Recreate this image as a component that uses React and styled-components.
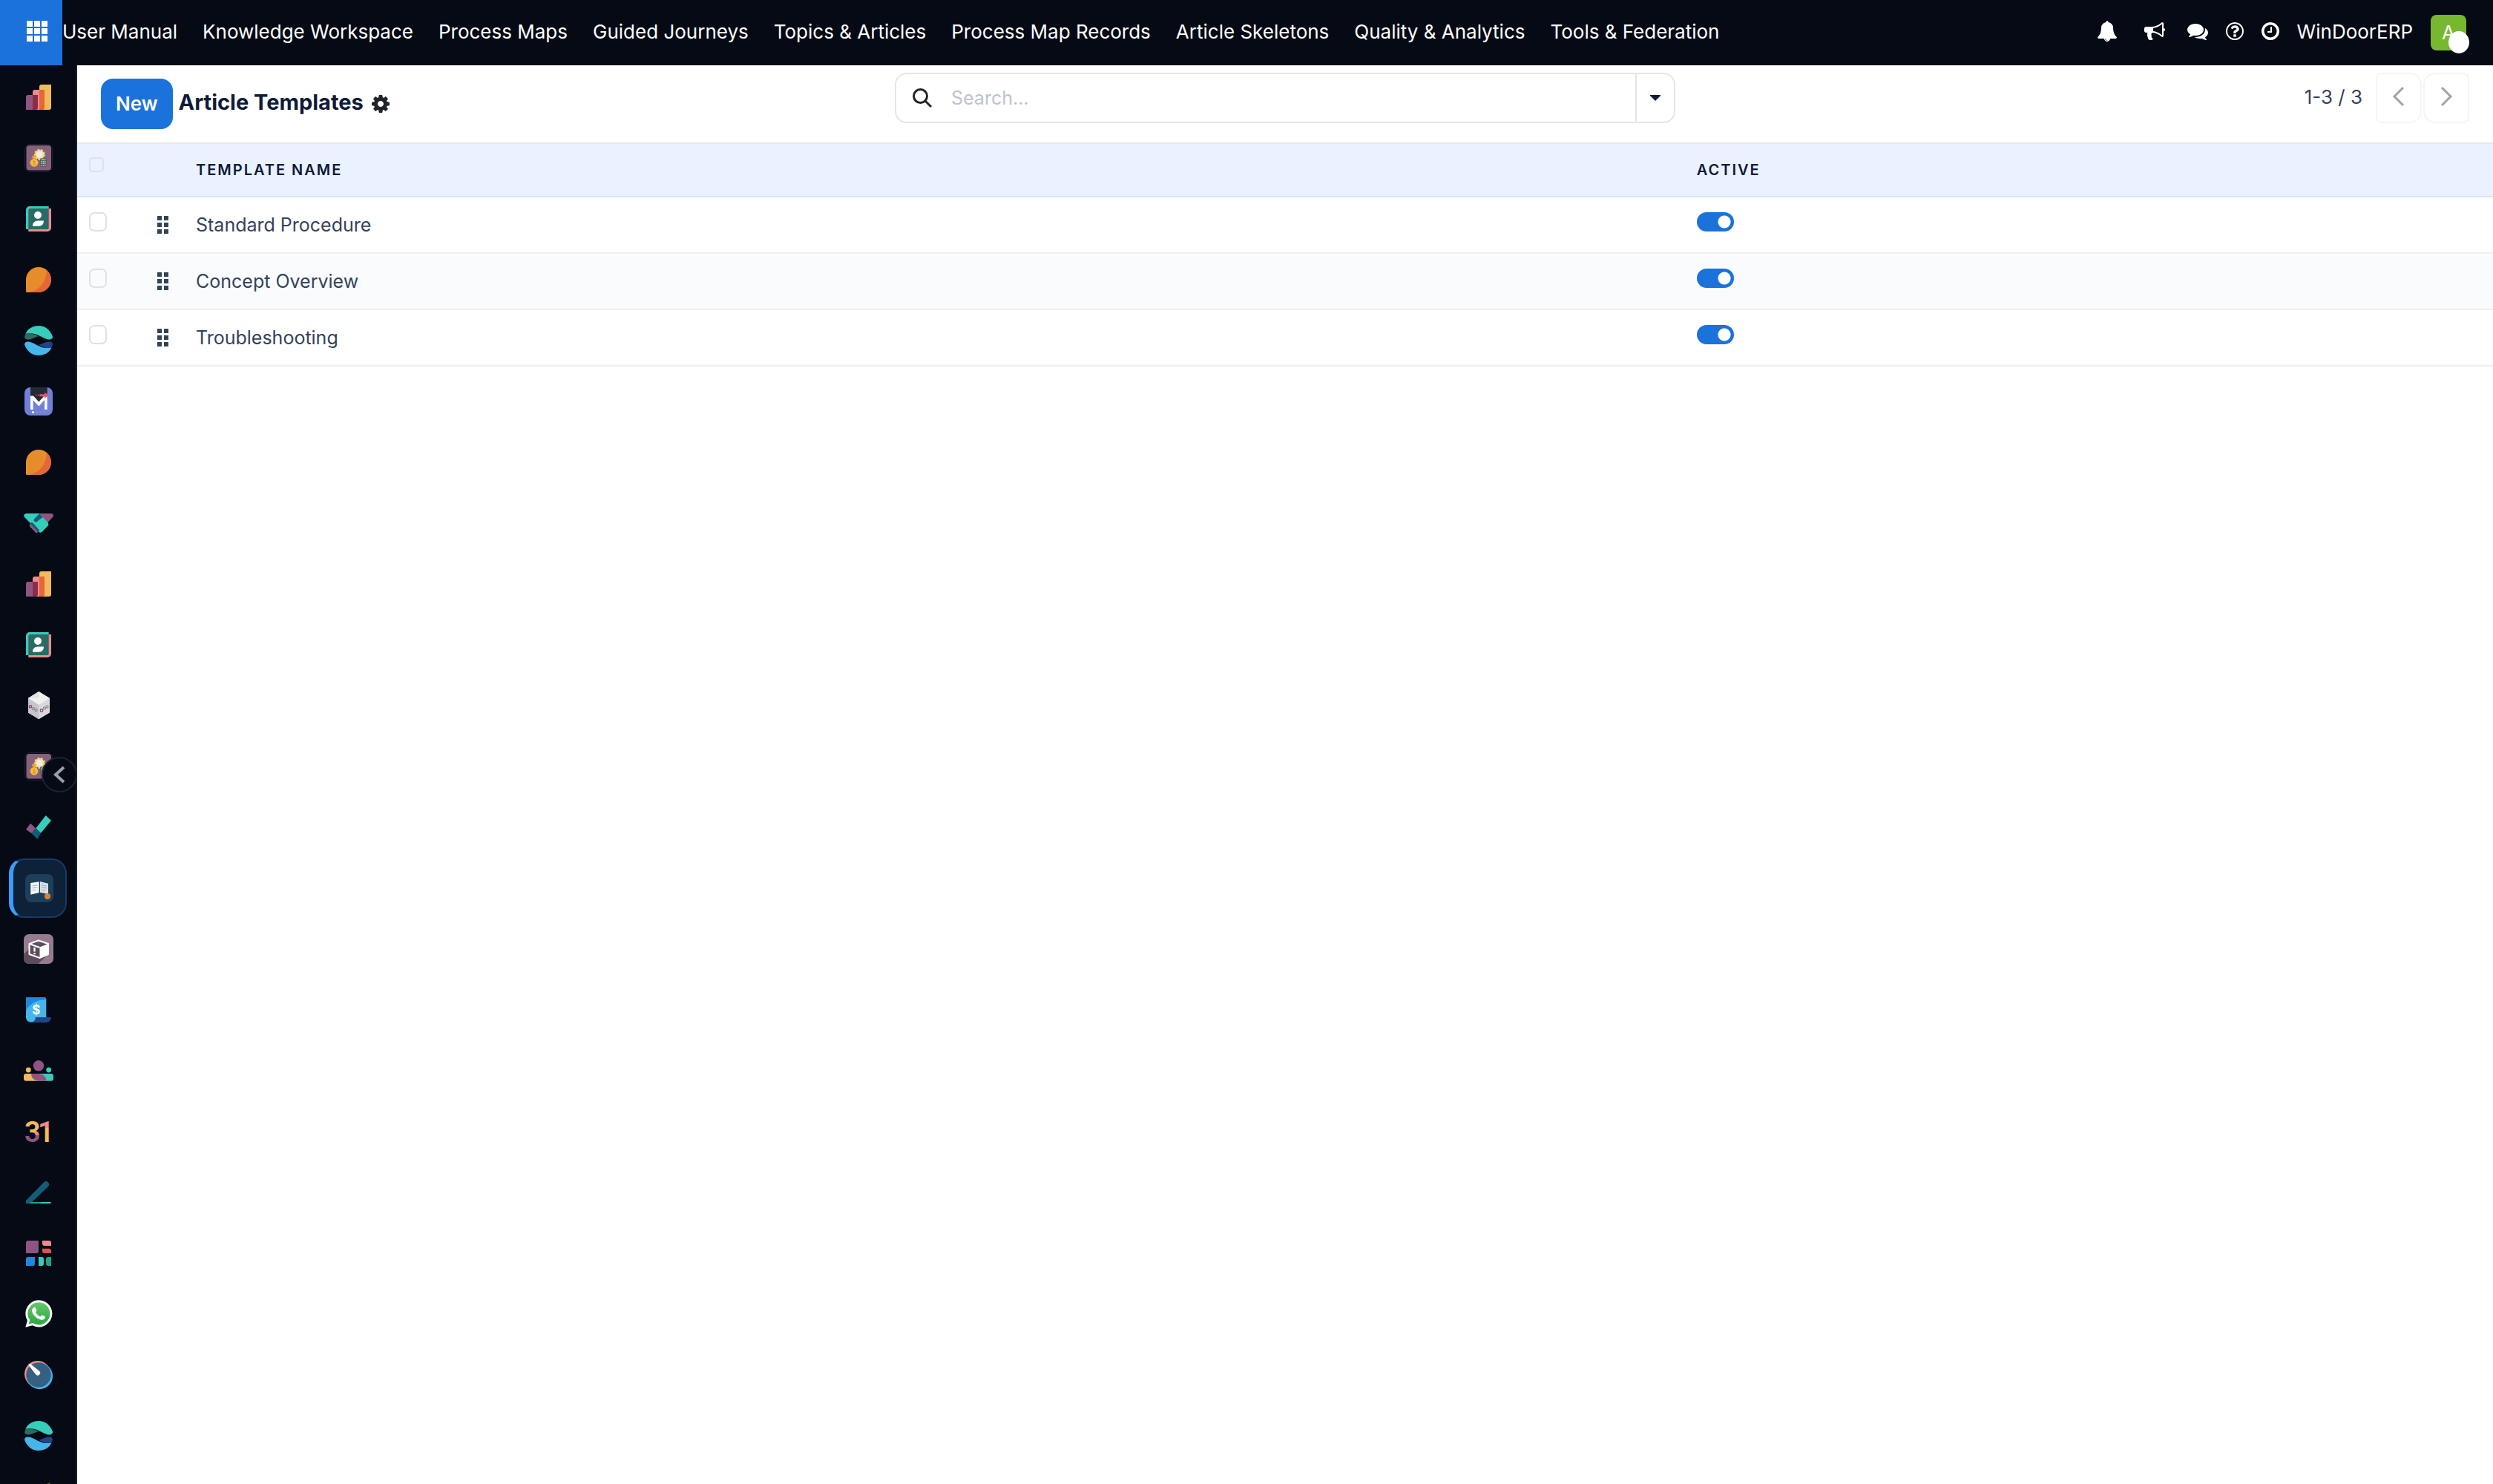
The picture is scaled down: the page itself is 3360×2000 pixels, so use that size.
import React from 'react';
import { useState } from 'react';
import styled, { createGlobalStyle } from 'styled-components';

const GlobalStyle = createGlobalStyle`
  *, *::before, *::after { box-sizing : border-box; }
  body {
    margin : 0;
    background-color : #ffffff;
    font-family : Inter, "Noto Sans", sans-serif;
    font-size : 26px;
    line-height : 40px;
    overflow : hidden;
  }
  button, input { font : inherit; }
  a { color : inherit; text-decoration : none; }
  svg { display : block; flex : none; overflow : visible; }
`

const Page = styled.div`
  height : 100vh;
  display : flex;
  flex-direction : column;
`

/* ---------- top bar ---------- */

const Navbar = styled.header`
  height : 88px;
  flex : none;
  display : flex;
  align-items : center;
  background-color : #050a15;
  color : #ffffff;
`

const AppsButton = styled.button`
  width : 84px;
  height : 100%;
  padding : 0 0 4px 16px;
  border : none;
  display : flex;
  align-items : center;
  justify-content : center;
  background-color : #1b72db;
  color : #ffffff;
  cursor : pointer;
`

const Menu = styled.nav`
  flex : 1;
  display : flex;
  gap : 34px;
  padding-bottom : 2px;
  white-space : nowrap;
`

const Systray = styled.div`
  display : flex;
  align-items : center;
  padding-right : 36px;
  white-space : nowrap;
`

const TrayButton = styled.button`
  padding : 0 ${props=>props.$pad || "10px"} 4px;
  border : none;
  background : none;
  color : #ffffff;
  cursor : pointer;
`

const Company = styled.span`
  padding : 0 24px 2px 12px;
`

const Avatar = styled.div`
  position : relative;
  width : 48px;
  height : 48px;
  border-radius : 8px;
  background-color : #78b82f;
  line-height : 48px;
  text-align : center;
`

const Status = styled.span`
  position : absolute;
  right : -4px;
  bottom : -4px;
  width : 28px;
  height : 30px;
  border-radius : 50%;
  background-color : #ffffff;
`

/* ---------- app sidebar ---------- */

const Body = styled.div`
  flex : 1;
  min-height : 0;
  display : flex;
`

const Sidebar = styled.aside`
  position : relative;
  width : 104px;
  flex : none;
  border-right : 2px solid #1b2331;
  background-color : #050a15;
`

const AppList = styled.nav`
  height : 100%;
  padding : 3px 12px 0;
  display : flex;
  flex-direction : column;
  gap : 2px;
  overflow : hidden;
`

const AppLink = styled.a`
  height : 80px;
  flex : none;
  display : flex;
  align-items : center;
  justify-content : center;
  border-radius : 20px;
  border : 2px solid ${props=>props.$active ? "#163c66" : "transparent"};
  border-left : ${props=>props.$active ? "6px solid #3b9cff" : "4px solid transparent"};
  background-color : ${props=>props.$active ? "#0d2139" : "transparent"};
`

const Collapse = styled.button`
  position : absolute;
  right : -2px;
  top : 50%;
  width : 48px;
  height : 48px;
  margin-top : -24px;
  padding : 0;
  display : flex;
  align-items : center;
  justify-content : center;
  border : 2px solid #1b2331;
  border-radius : 50%;
  background-color : #050a15;
  color : #9a9daa;
  cursor : pointer;
`

/* ---------- control panel ---------- */

const Main = styled.main`
  flex : 1;
  min-width : 0;
`

const ControlPanel = styled.div`
  display : grid;
  grid-template-columns : repeat(3, 1fr);
  gap : 18px;
  padding : 10px 32px 18px;
  border-bottom : 2px solid #e5e7eb;
`

const Actions = styled.div`
  display : flex;
  align-items : center;
  gap : 8px;
  padding-top : 8px;
`

const NewButton = styled.button`
  height : 68px;
  padding : 0 20px;
  border : none;
  border-radius : 16px;
  background-color : #1b72db;
  color : #ffffff;
  font-weight : 600;
  cursor : pointer;
`

const Title = styled.h1`
  margin : 0;
  padding-bottom : 4px;
  color : #0f1b38;
  font-size : 29px;
  font-weight : 700;
`

const IconButton = styled.button`
  padding : 0 3px;
  border : none;
  background : none;
  color : #212529;
  cursor : pointer;
`

const SearchBox = styled.div`
  height : 68px;
  display : flex;
  align-items : center;
  border : 2px solid #e5e6ea;
  border-radius : 16px;
  color : #212529;
`

const SearchLabel = styled.label`
  flex : 1;
  display : flex;
  align-items : center;
  gap : 26px;
  padding-left : 22px;
`

const SearchInput = styled.input`
  flex : 1;
  min-width : 0;
  padding : 0;
  border : none;
  outline : none;
  background : none;
  font-size : 25px;
  color : #33435a;
  &::placeholder { color : #bcc3cc; opacity : 1; }
`

const SearchToggle = styled.button`
  width : 52px;
  height : 100%;
  padding : 0;
  display : flex;
  align-items : center;
  justify-content : center;
  border : none;
  border-left : 2px solid #e5e6ea;
  background : none;
  color : #0f1b38;
  cursor : pointer;
`

const Pager = styled.div`
  display : flex;
  align-items : flex-start;
  justify-content : flex-end;
  gap : 2px;
  color : #33435a;
`

const PagerText = styled.span`
  padding : 13px 16px 0 0;
`

const PagerButton = styled.button`
  width : 62px;
  height : 68px;
  padding : 0 0 4px;
  display : flex;
  align-items : center;
  justify-content : center;
  border : 2px solid #f4f5f6;
  border-radius : ${props=>props.$next ? "16px 8px 8px 16px" : "8px 16px 16px 8px"};
  background : none;
  color : #9fa3af;
`

/* ---------- list ---------- */

const List = styled.table`
  width : 100%;
  table-layout : fixed;
  border-collapse : separate;
  border-spacing : 0;
`

const Col = styled.col`
  width : ${props=>props.$width || "auto"};
`

const Head = styled.th`
  height : 72px;
  padding : 0 12px;
  border-bottom : 2px solid #d5e7fd;
  background-color : #eaf2ff;
  color : #0f1b38;
  font-size : 20px;
  font-weight : 600;
  letter-spacing : 2px;
  text-align : left;
  text-transform : uppercase;
`

const HeadCheck = styled(Head)`
  padding : 18px 16px 0;
  vertical-align : top;
`

const Row = styled.tr`
  &:nth-child(even) { background-color : #fafbfd; }
`

const Cell = styled.td`
  height : 76px;
  padding : 0 12px;
  border-bottom : 2px solid #eeeff2;
  color : #33435a;
  font-size : 25px;
`

const ControlCell = styled(Cell)`
  padding : 20px ${props=>props.$side || "12px"} 0;
  vertical-align : top;
`

const HandleCell = styled(Cell)`
  padding-left : 24px;
`

const Check = styled.input`
  appearance : none;
  display : block;
  width : ${props=>props.$small ? "20px" : "24px"};
  height : ${props=>props.$small ? "20px" : "26px"};
  margin : 0;
  border : 2px solid #dee1e6;
  border-radius : ${props=>props.$small ? "5px" : "7px"};
  &:checked { background-color : #1b72db; }
`

const Switch = styled.input`
  appearance : none;
  display : block;
  width : 50px;
  height : 26px;
  margin : 0;
  border-radius : 13px;
  background : radial-gradient(circle at 13px 13px, #ffffff 8px, transparent 9px) #c3c8d0;
  &:checked {
    background : radial-gradient(circle at 37px 13px, #ffffff 8px, transparent 9px) #1b72db;
  }
`

/* ---------- glyphs ---------- */

// Font Awesome 4 outlines
const glyphs = {
  bell: "M912 1696q0-16-16-16-59 0-101.5-42.5t-42.5-101.5q0-16-16-16t-16 16q0 73 51.5 124.5t124.5 51.5q16 0 16-16zm816-288q0 52-38 90t-90 38h-448q0 106-75 181t-181 75-181-75-75-181h-448q-52 0-90-38t-38-90q50-42 91-88t85-119.5 74.5-158.5 50-206 19.5-260q0-152 117-282.5t307-158.5q-8-19-8-39 0-40 28-68t68-28 68 28 28 68q0 20-8 39 190 28 307 158.5t117 282.5q0 139 19.5 260t50 206 74.5 158.5 85 119.5 91 88z",
  bullhorn: "M1664 640q53 0 90.5 37.5t37.5 90.5-37.5 90.5-90.5 37.5v384q0 52-38 90t-90 38q-417-347-812-380-58 19-91 66t-31 100.5 40 92.5q-20 33-23 65.5t6 58 33.5 55 48 50 61.5 50.5q-29 58-111.5 83t-168.5 11.5-132-55.5q-7-23-29.5-87.5t-32-94.5-23-89-15-101 3.5-98.5 22-110.5h-122q-66 0-113-47t-47-113v-192q0-66 47-113t113-47h480q435 0 896-384 52 0 90 38t38 90v384zm-128 604v-954q-394 302-768 343v270q377 42 768 341z",
  comments: "M1408 768q0 139-94 257t-256.5 186.5-353.5 68.5q-86 0-176-16-124 88-278 128-36 9-86 16h-3q-11 0-20.5-8t-11.5-21q-1-3-1-6.5t.5-6.5 2-6l2.5-5 3.5-5.5 4-5 4.5-5 4-4.5q5-6 23-25t26-29.5 22.5-29 25-38.5 20.5-44q-124-72-195-177t-71-224q0-139 94-257t256.5-186.5 353.5-68.500 353.5 68.5 256.500 186.500 94 257zm384 256q0 120-71 224.500t-195 176.500q10 24 20.500 44t25 38.500 22.500 29 26 29.500 23 25q1 1 4 4.500t4.500 5 4 5 3.500 5.500l2.500 5 2 6 .5 6.500-1 6.500q-3 14-13 22t-22 7q-50-7-86-16-154-40-278-128-90 16-176 16-271 0-472-132 58 4 88 4 161 0 309-45t264-129q125-92 192-212t67-254q0-77-23-152 129 71 204 178t75 230z",
  question: "M1008 1200v160q0 14-9 23t-23 9h-160q-14 0-23-9t-9-23v-160q0-14 9-23t23-9h160q14 0 23 9t9 23zm256-496q0 50-15 90t-45.5 69-52 44-59.5 36q-32 18-46.5 28t-26 24-11.5 29v32q0 14-9 23t-23 9h-160q-14 0-23-9t-9-23v-68q0-35 10.5-64.5t24-47.5 39-35.5 41-25.5 44.5-21q53-25 75-43t22-49q0-42-43.5-71.5t-95.5-29.5q-56 0-95 27-29 20-80 83-9 12-25 12-11 0-19-6l-108-82q-10-7-12-20t5-23q122-192 349-192 129 0 238.5 89.5t109.5 214.5zm-368-448q-130 0-248.5 51t-204 136.5-136.5 204-51 248.5 51 248.5 136.5 204 204 136.5 248.5 51 248.5-51 204-136.5 136.5-204 51-248.5-51-248.5-136.5-204-204-136.5-248.5-51zm768 640q0 209-103 385.5t-279.5 279.5-385.5 103-385.5-103-279.5-279.5-103-385.5 103-385.5 279.5-279.5 385.5-103 385.5 103 279.5 279.5 103 385.5z",
  clock: "M1024 544v448q0 14-9 23t-23 9h-320q-14 0-23-9t-9-23v-64q0-14 9-23t23-9h224v-352q0-14 9-23t23-9h64q14 0 23 9t9 23zm416 352q0-148-73-273t-198-198-273-73-273 73-198 198-73 273 73 273 198 198 273 73 273-73 198-198 73-273zm224 0q0 209-103 385.5t-279.5 279.5-385.5 103-385.5-103-279.5-279.5-103-385.5 103-385.5 279.5-279.5 385.5-103 385.5 103 279.5 279.5 103 385.5z",
}

const Glyph = ({ name }) => (
  <svg width="28" height="28" viewBox="0 0 1792 1792" fill="currentColor"><path d={glyphs[name]} /></svg>
)

const Cog = () => (
  <svg width="24" height="24" viewBox="0 -128 1536 1536" fill="currentColor">
    <path d="M1024 640q0-106-75-181t-181-75-181 75-75 181 75 181 181 75 181-75 75-181zm512-109v222q0 12-8 23t-20 13l-185 28q-19 54-39 91 35 50 107 138 10 12 10 25t-9 23q-27 37-99 108t-94 71q-12 0-26-9l-138-108q-44 23-91 38-16 136-29 186-7 28-36 28h-222q-14 0-24.500-8.500t-11.500-21.500l-28-184q-49-16-90-37l-141 107q-10 9-25 9-14 0-25-11-126-114-165-168-7-10-7-23 0-12 8-23 15-21 51-66.500t54-70.500q-27-50-41-99l-183-27q-13-2-21-12.500t-8-23.500v-222q0-12 8-23t19-13l186-28q14-46 39-92-40-57-107-138-10-12-10-24 0-10 9-23 26-36 98.500-107.500t94.500-71.500q13 0 26 10l138 107q44-23 91-38 16-136 29-186 7-28 36-28h222q14 0 24.500 8.500t11.500 21.500l28 184q49 16 90 37l142-107q9-9 24-9 13 0 25 10 129 119 165 170 7 8 7 22 0 12-8 23-15 21-51 66.500t-54 70.500q26 50 41 98l183 28q13 2 21 12.500t8 23.500z" />
  </svg>
)

const Chevron = ({ d, size = 26, width = 3 }) => (
  <svg width={size} height={size} viewBox="0 0 26 26" fill="none" stroke="currentColor" strokeWidth={width}><path d={d} /></svg>
)

const Squares = ({ cols, rows, size, step }) => (
  <svg width={(cols - 1) * step + size} height={(rows - 1) * step + size} fill="currentColor">
    {Array.from({ length: cols * rows }, (_, i) => (
      <rect key={i} x={(i % cols) * step} y={Math.floor(i / cols) * step} width={size} height={size} />
    ))}
  </svg>
)

/* ---------- app icons, all on a 40 x 40 grid ---------- */

const chart = (
  <>
    <path d="M6 17h13v20H3V20a3 3 0 0 1 3-3z" fill="#8f5580" />
    <path d="M15 10h13v24a3 3 0 0 1-3 3H12V13a3 3 0 0 1 3-3z" fill="#ed8b8f" />
    <path d="M24 3h13v31a3 3 0 0 1-3 3H21V6a3 3 0 0 1 3-3z" fill="#f1ba5c" />
    <path d="M12 17h7v17a3 3 0 0 1-3 3h-4z" fill="#8a2d48" />
    <path d="M21 10h7v24a3 3 0 0 1-3 3h-4z" fill="#e56637" />
  </>
)

const budget = (
  <>
    <rect x="1.500" y="1.500" width="37" height="37" rx="7" fill="#0b0c18" stroke="#231f2e" />
    <rect x="3.500" y="3" width="33.500" height="33.500" rx="4" fill="#86617c" />
    <circle cx="21.300" cy="15.300" r="6.200" fill="#fbdc7c" stroke="#f9d978" strokeWidth="2.600" strokeDasharray="2.600 1.700" />
    <circle cx="21.300" cy="15.300" r="4.200" fill="#e8ecf3" />
    <path d="M11 17.500l4-1.500 2 1-1.500 4.500h-3z" fill="#e9a92f" />
    <circle cx="14" cy="26.300" r="5.400" fill="#f3bb45" />
    <path d="M15.500 24.500q-3-1-3 .7t1.600 1.200 1.300 1.700-3 .5M14 23v7" stroke="#d98f22" fill="none" strokeWidth=".8" />
    <rect x="22.300" y="20.300" width="8.400" height="11.400" rx="1" fill="#55595d" />
    <rect x="23.300" y="21.300" width="6.400" height="1.800" fill="#55d3a5" />
    <path d="M24.200 24v6.700M26.500 24v6.700M28.800 24v6.700" stroke="#c8cbd0" strokeWidth="1.500" strokeDasharray="1.500 1" />
  </>
)

const contacts = (
  <>
    <path d="M8 3h25.700v31H3V8a5 5 0 0 1 5-5z" fill="#36cdbb" />
    <path d="M6.300 6H37v26a5 5 0 0 1-5 5H6.300z" fill="#ed8b8f" />
    <path d="M8.300 6h25.400v26a2 2 0 0 1-2 2H6.300V8a2 2 0 0 1 2-2z" fill="#296c65" />
    <circle cx="19" cy="15" r="5" fill="#ffffff" />
    <path d="M12 29.700q0-7 7-7.200h8q0 7-7 7.200z" fill="#ffffff" />
  </>
)

const leaf = (
  <>
    <path d="M3 20a17 17 0 1 1 17 17H4.500A1.500 1.500 0 0 1 3 35.500z" fill="#e78c2b" />
    <path d="M30.700 6.900A17 17 0 0 1 20 37H5C19 36 31 24 30.700 6.900z" fill="#e56637" />
  </>
)

const waves = (
  <>
    <path d="M2.500 11C5 4 12 0 20 0c9 0 16 6 19 14.500.3 4.500-5 5-10 2.800C21 14 15 8 2.500 11z" fill="#36cdbb" />
    <path d="M2.500 10.500C8 9 14 11 20 14.200c-3 .5-6 2.300-9.500 3.500-5 1.800-10 .8-9.300-3.200z" fill="#296c65" />
    <path d="M37.500 29C35 36 28 40 20 40c-9 0-16-6-19-14.500-.3-4.500 5-5 10-2.800C19 26 25 32 37.500 29z" fill="#45b5ea" />
    <path d="M37.500 29.500C32 31 26 29 20 25.800c3-.5 6-2.300 9.500-3.500 5-1.800 10-.8 9.300 3.200z" fill="#1d4587" />
  </>
)

const migrate = (
  <>
    <rect x="1" y="1" width="38" height="38" rx="8" fill="#6e80da" />
    <path d="M9 1h22.700v16L20.300 25 9 14z" fill="#252a36" />
    <path d="M9 12.500h4l7.300 8 7.400-8h4V31H28V18.500l-7.700 8-7.600-8V31H9z" fill="#fafafa" />
    <path d="M28 8l6.500 3.300-6.500 4.500v-2.600h-6.500v-3H28z" fill="#e2566a" />
    <path d="M16 11.500h1.500M19 11.500h2" stroke="#a8485a" strokeWidth="2" />
    <circle cx="12.500" cy="34.500" r="1.500" fill="#ffffff" />
    <circle cx="17.500" cy="34.500" r="1.400" fill="#8f91a0" />
    <circle cx="22.500" cy="34.500" r="1.400" fill="#8f91a0" />
    <circle cx="27.500" cy="34.500" r="1.400" fill="#8f91a0" />
  </>
)

const handshake = (
  <>
    <path d="M21 7h15.500c3.500 0 4.500 3 2.500 5l-7 7.500z" fill="#8f5580" />
    <path d="M8 21l3-1.500 9.500 11-1.500 2q-1.500.5-2.500 0L8.500 24.500q-1-2-.5-3.500z" fill="#8f5580" />
    <path d="M3.500 7H21l11.700 12.500q1.300 2 0 4L24.500 32q-2 1.300-4 0L1 12Q-1.500 8 3.500 7z" fill="#36cdbb" />
    <path d="M21 7.500l-7 7c-1.500 3 1.500 5 4 3.500l3-2.500q2-1.500 4.500-3.500z" fill="#115e79" />
    <path d="M10.800 21l8.200 9" stroke="#115e79" strokeWidth="4" strokeLinecap="round" />
    <path d="M9.500 23.700l7.300 7.800" stroke="#8f5580" strokeWidth="3" strokeLinecap="round" />
  </>
)

const cube = (
  <>
    <path d="M20.300 1L35 10v19.500L20.300 38.300 6 29.500V10z" fill="#d9d9da" />
    <path d="M20.300 1L35 10l-14.700 9L6 10z" fill="#f0f0f0" />
    <path d="M20.300 1v8.500L6 10z" fill="#e2e2e3" />
    <path d="M6 10l14.300 9v19.300L6 29.500z" fill="#c6c6c9" />
    <g fill="none" strokeWidth="1.200">
      <circle cx="9" cy="21.300" r="1.700" stroke="#93377a" />
      <circle cx="13" cy="24" r="1.600" stroke="#8e8e92" />
      <circle cx="16.500" cy="26" r="1.600" stroke="#8e8e92" />
      <circle cx="24" cy="26.500" r="1.800" stroke="#93377a" />
      <circle cx="28" cy="23.500" r="1.600" stroke="#8e8e92" />
      <circle cx="31.500" cy="21.500" r="1.600" stroke="#8e8e92" />
    </g>
  </>
)

const check = (
  <>
    <path d="M29.700 4l7.300 6.700-14 17-6.700-6.400z" fill="#36cdbb" />
    <path d="M9 14.700l7.300 6.600-6 6.700L3 22.700z" fill="#8f5580" />
    <path d="M16.300 21.300l6.700 6.400-4.700 8-8-7.700z" fill="#115e79" />
  </>
)

const manual = (
  <>
    <rect x="1" y="1" width="38" height="38" rx="8" fill="#1d3f59" />
    <path d="M8.300 13l11.400-1.700V26L8.300 28.700z" fill="#f4f7fa" />
    <path d="M21 11l11 2.700V28l-11-2.300z" fill="#d6e0ea" />
    <path d="M10.500 17l7-1M10.500 20l7-1M10.500 23l5-.8M23 16l7 1M23 19l7 1M23 22l5 .8" stroke="#9fb0c0" />
    <circle cx="31" cy="31" r="4" fill="#d98136" />
  </>
)

const parcel = (
  <>
    <rect width="40" height="40" rx="7" fill="#967b90" />
    <path d="M7 20L0 27v6a7 7 0 0 0 7 7h12.500L33 27z" fill="#5d4c5a" />
    <path d="M7.500 13L20 8.500 33 13v14l-11.500 5L7.500 27z" fill="#5d4c5a" stroke="#ffffff" strokeWidth="2" strokeLinejoin="round" />
    <path d="M21.500 17.500L33 13v14l-11.500 5z" fill="#ffffff" />
    <path d="M24 19.500l6.500-2.700v8.400L24 28z" fill="#ffffff" />
    <path d="M7.500 13l14 5" stroke="#ffffff" strokeWidth="2" />
    <path d="M20 9.500v4" stroke="#967b90" />
    <path d="M14.500 18v5.500M14.500 25v2.200" stroke="#ffffff" strokeWidth="2.400" />
  </>
)

const invoice = (
  <>
    <path d="M16 30h21q-.5 6-6 7H10z" fill="#1d4587" />
    <path d="M3 3h24.300a3 3 0 0 1 3 3v24H16a6.500 6.500 0 0 1-13 .5z" fill="#45b5ea" />
    <path d="M3 3h24.300a3 3 0 0 1 3 3v.3C17 6.500 8 12 3 21z" fill="#1f87e0" />
    <text x="16.700" y="25.500" fontSize="17" fontWeight="700" fontFamily="Inter, sans-serif" textAnchor="middle" fill="#ffffff">$</text>
  </>
)

const people = (
  <>
    <circle cx="20" cy="13.300" r="7.200" fill="#8f5580" />
    <circle cx="6.300" cy="19" r="3.400" fill="#f1ba5c" />
    <circle cx="33.700" cy="19" r="3.400" fill="#36cdbb" />
    <path d="M3 24h17v9.700H3a3 3 0 0 1-3-3V27a3 3 0 0 1 3-3z" fill="#f1ba5c" />
    <path d="M20 24h17a3 3 0 0 1 3 3v3.700a3 3 0 0 1-3 3H20z" fill="#36cdbb" />
    <path d="M10 24h10.500q9.500 1 10 9.700H20Q10 32.500 10 24z" fill="#8f5580" />
  </>
)

const calendar = (
  <>
    <defs>
      <linearGradient id="three" x1="0" y1="0" x2="0" y2="1">
        <stop offset=".5" stopColor="#f1ba5c" />
        <stop offset=".5" stopColor="#ed8b8f" />
        <stop offset=".58" stopColor="#ed8b8f" />
        <stop offset=".58" stopColor="#8f5580" />
      </linearGradient>
      <linearGradient id="one" x1="0" y1="0" x2="0" y2="1">
        <stop offset=".36" stopColor="#ed8b8f" />
        <stop offset=".36" stopColor="#f1ba5c" />
      </linearGradient>
    </defs>
    <g fontSize="38" fontWeight="600" fontFamily="Roboto, sans-serif">
      <text x="1" y="34" fill="url(#three)">3</text>
      <text x="19" y="34" fill="url(#one)">1</text>
    </g>
  </>
)

const sign = (
  <>
    <path d="M3 31L27 6.500a4 4 0 0 1 6 5.500L9 35H3z" fill="#115e79" />
    <path d="M9 33h14l-2 2H7z" fill="#1fa583" />
    <path d="M23 33h14l-1 2H21z" fill="#36cdbb" />
  </>
)

const dashboard = (
  <>
    <path d="M6 3h14v14a3 3 0 0 1-3 3H3V6a3 3 0 0 1 3-3z" fill="#8f5580" />
    <path d="M25 3h9a3 3 0 0 1 3 3v4h-9a3 3 0 0 1-3-3z" fill="#ed8b8f" />
    <path d="M25 13.700h9a3 3 0 0 1 3 3V20h-9a3 3 0 0 1-3-3z" fill="#e2504f" />
    <path d="M6 25h9v9a3 3 0 0 1-3 3H3v-9a3 3 0 0 1 3-3z" fill="#1f87e0" />
    <path d="M20 25h4a3 3 0 0 1 3 3v6a3 3 0 0 1-3 3h-4z" fill="#36cdbb" />
    <path d="M33 25h4v12h-4a3 3 0 0 1-3-3v-6a3 3 0 0 1 3-3z" fill="#1fa583" />
  </>
)

const whatsapp = (
  <>
    <defs>
      <linearGradient id="wa" x1="0" y1="0" x2="0" y2="1">
        <stop offset="0" stopColor="#62c96a" />
        <stop offset="1" stopColor="#2fa63e" />
      </linearGradient>
    </defs>
    <path d="M20.300 1.200a18.100 18.100 0 1 1-8.700 34L2.300 37.700 4.900 28.500A18.100 18.100 0 0 1 20.300 1.200z" fill="#ffffff" />
    <path d="M20.300 4.200a15.100 15.100 0 1 1-8 27.900L6.700 33.500l1.500-5.400A15.100 15.100 0 0 1 20.300 4.200z" fill="url(#wa)" />
    <path d="M13 11.600c1.200-1 2.800-.8 3.300.5l1 2.700c.4 1.200-.8 1.900-1.200 2.700 1.500 2.800 3.500 4.700 6.500 6 .9-.8 1.600-2.300 2.800-1.900l3 1.500c1.200.8.300 3-1.300 4-2.200 1.200-4.600.6-7.100-.6-4-2-7.800-6-8.700-9.500-.5-2 .1-4.100 1.700-5.400z" fill="#ffffff" />
  </>
)

const gauge = (
  <>
    <circle cx="18.700" cy="18.700" r="17.700" fill="#ed8b8f" />
    <circle cx="21.300" cy="21.500" r="17.700" fill="#45b5ea" />
    <circle cx="20" cy="20" r="16.700" fill="#35607f" />
    <path d="M6.500 6.800q-.5-2 2-2l12.500 10a3.300 3.300 0 0 1-4.500 5z" fill="#ffffff" />
  </>
)

const coin = <path d="M35 1l2 7-6 5H9z" fill="#5c5320" />

const apps = [
  ["Dashboards", chart], ["Budget", budget], ["Contacts", contacts], ["Subscriptions", leaf],
  ["Spreadsheets", waves], ["Migration", migrate], ["Rental", leaf], ["CRM", handshake],
  ["Sales", chart], ["Directory", contacts], ["Blockchain", cube], ["Costing", budget],
  ["To-do", check], ["User Manual", manual], ["Inventory", parcel], ["Invoicing", invoice],
  ["Employees", people], ["Calendar", calendar], ["Sign", sign], ["Studio", dashboard],
  ["WhatsApp", whatsapp], ["Timesheets", gauge], ["Planning", waves], ["Payroll", coin],
]

const menuItems = [
  "User Manual", "Knowledge Workspace", "Process Maps", "Guided Journeys", "Topics & Articles",
  "Process Map Records", "Article Skeletons", "Quality & Analytics", "Tools & Federation",
]

const trayItems = [
  { name: "bell", label: "Notifications", pad: "18px" },
  { name: "bullhorn", label: "Announcements", pad: "18px" },
  { name: "comments", label: "Messages", pad: "12px" },
  { name: "question", label: "Help" },
  { name: "clock", label: "Activities" },
]

const TemplateRow = ({ name }) => {
  const [active, setActive] = useState(true)
  return (
    <Row>
      <ControlCell $side="16px"><Check type="checkbox" aria-label={"Select " + name} /></ControlCell>
      <HandleCell><Squares cols={2} rows={3} size={6} step={9} /></HandleCell>
      <Cell>{name}</Cell>
      <ControlCell>
        <Switch type="checkbox" role="switch" aria-label={name + " active"} checked={active} onChange={() => setActive(!active)} />
      </ControlCell>
    </Row>
  )
}

const App = () => (
  <Page>
    <GlobalStyle />
    <Navbar>
      <AppsButton aria-label="Apps"><Squares cols={3} rows={3} size={8} step={10} /></AppsButton>
      <Menu>
        {menuItems.map(item => <a key={item} href="#">{item}</a>)}
      </Menu>
      <Systray>
        {trayItems.map(item => (
          <TrayButton key={item.name} $pad={item.pad} aria-label={item.label}><Glyph name={item.name} /></TrayButton>
        ))}
        <Company>WinDoorERP</Company>
        <Avatar>A<Status /></Avatar>
      </Systray>
    </Navbar>
    <Body>
      <Sidebar>
        <AppList>
          {apps.map(([name, icon]) => (
            <AppLink key={name} href="#" aria-label={name} $active={name === "User Manual"}>
              <svg width="40" height="40" viewBox="0 0 40 40">{icon}</svg>
            </AppLink>
          ))}
        </AppList>
        <Collapse aria-label="Collapse sidebar"><Chevron d="M19 3L8 13l11 10" width={4} /></Collapse>
      </Sidebar>
      <Main>
        <ControlPanel>
          <Actions>
            <NewButton>New</NewButton>
            <Title>Article Templates</Title>
            <IconButton aria-label="Actions"><Cog /></IconButton>
          </Actions>
          <SearchBox>
            <SearchLabel>
              <svg width="26" height="26" viewBox="0 0 26 26" fill="none" stroke="currentColor" strokeWidth="3">
                <circle cx="10.500" cy="10.500" r="9" />
                <path d="M17 17l8 8" />
              </svg>
              <SearchInput type="text" placeholder="Search..." aria-label="Search" />
            </SearchLabel>
            <SearchToggle aria-label="Search options">
              <svg width="14" height="8" fill="currentColor"><path d="M0 0h14v1L7 8 0 1z" /></svg>
            </SearchToggle>
          </SearchBox>
          <Pager>
            <PagerText>1-3 / 3</PagerText>
            <PagerButton aria-label="Previous"><Chevron d="M19 1L7 13l12 12" /></PagerButton>
            <PagerButton $next aria-label="Next"><Chevron d="M7 1l12 12L7 25" /></PagerButton>
          </Pager>
        </ControlPanel>
        <List>
          <colgroup>
            <Col $width="84px" />
            <Col $width="64px" />
            <Col />
            <Col $width="33.333%" />
          </colgroup>
          <thead>
            <tr>
              <HeadCheck><Check $small type="checkbox" aria-label="Select all" /></HeadCheck>
              <Head />
              <Head>Template Name</Head>
              <Head>Active</Head>
            </tr>
          </thead>
          <tbody>
            {["Standard Procedure", "Concept Overview", "Troubleshooting"].map(name => <TemplateRow key={name} name={name} />)}
          </tbody>
        </List>
      </Main>
    </Body>
  </Page>
)

export default App;
